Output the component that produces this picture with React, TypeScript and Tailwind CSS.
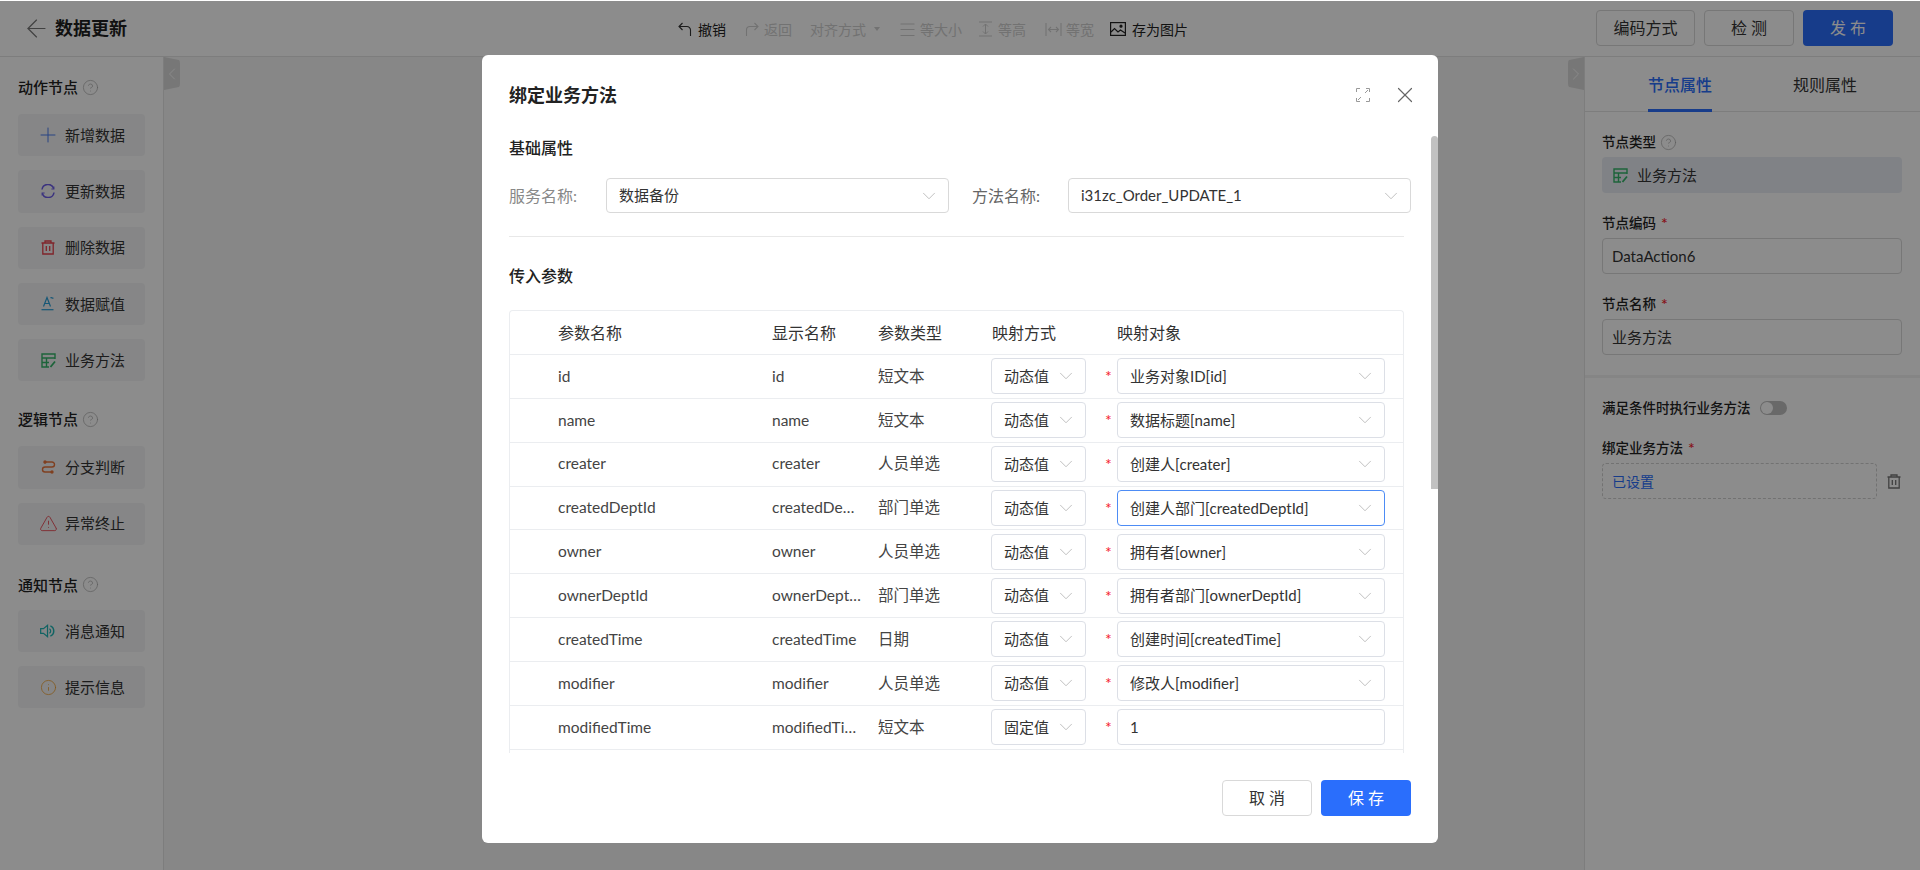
import { ArrowLeft, ChevronDown, ChevronLeft, ChevronRight, CircleHelp, Info, Plus, TriangleAlert, X } from "lucide-react";
import type { ReactNode } from "react";

const FONT = "font-['Lato','Noto_Sans_CJK_SC',sans-serif]";

function HelpIcon() {
  return <CircleHelp size={17} strokeWidth={1} className="text-[#aaa]" />;
}

function RefreshIcon() {
  return (
    <svg width="14" height="14" viewBox="0 0 14 14" fill="none" stroke="#6c5ce7" strokeWidth="1.5">
      <path d="M1 5.5A6 6 0 0 1 12.6 4.5" />
      <path d="M13 8.5A6 6 0 0 1 1.4 9.5" />
      <path d="M12.8 2.4v2.6h-2.4M1.2 11.6V9h2.4" strokeWidth="1.2" />
    </svg>
  );
}

function TrashIcon({ color }: { color: string }) {
  return (
    <svg width="14" height="15" viewBox="0 0 14 15" fill="none" stroke={color} strokeWidth="1.3">
      <path d="M0.5 3h13M4 3V1h6v2M1.8 3v11h10.4V3M5.3 6v5M8.7 6v5" />
    </svg>
  );
}

function AssignIcon() {
  return (
    <svg width="14" height="15" viewBox="0 0 14 15" fill="none" stroke="#2b9fd8" strokeWidth="1.2">
      <path d="M2.5 10.5L6 1.5l3.5 9M3.8 7.5h4.4" />
      <path d="M9.5 2c1-1 1.6 0.4 3 0" />
      <path d="M0.5 13.7h12" />
    </svg>
  );
}

function MethodIcon() {
  return (
    <svg width="15" height="15" viewBox="0 0 15 15" fill="none" stroke="#35b56a" strokeWidth="1.4">
      <path d="M14 6V1H1v13h7" />
      <path d="M1 5h13M5.5 5v9M1 9.5h7" />
      <path d="M9.5 14l4.5-5.5" strokeWidth="1.8" />
    </svg>
  );
}

function BranchIcon() {
  return (
    <svg width="15" height="14" viewBox="0 0 15 14" fill="none" stroke="#e8743b" strokeWidth="1.4">
      <path d="M3.5 2H11a2.5 2.5 0 0 1 0 5H4a2.5 2.5 0 0 0 0 5h7.5" />
      <circle cx="4" cy="2" r="1" fill="#e8743b" />
      <circle cx="11" cy="12" r="1" fill="#e8743b" />
    </svg>
  );
}

function SpeakerIcon() {
  return (
    <svg width="17" height="14" viewBox="0 0 17 14" fill="none" stroke="#1fb5b5" strokeWidth="1.3">
      <path d="M0.7 4.5h3L8 1v12L3.7 9.5h-3z" />
      <path d="M10 4.5a3 3 0 0 1 0 5" />
      <path d="M11 1.5a6 6 0 0 1 0 11" strokeWidth="1.6" />
    </svg>
  );
}

function SideItem({ icon, label }: { icon: ReactNode; label: string }) {
  return (
    <div className="flex h-[42.25px] w-[127px] items-center rounded-sm bg-[#f4f5f6] pl-[22px] text-[15px] text-[#333]">
      <span className="flex w-4 justify-center">{icon}</span>
      <span className="ml-[9px]">{label}</span>
    </div>
  );
}

function SideTitle({ label, className }: { label: string; className: string }) {
  return (
    <div className={`flex h-[22px] items-center gap-1 text-[15px] font-medium text-[#222] ${className}`}>
      {label}
      <HelpIcon />
    </div>
  );
}

function Sidebar() {
  return (
    <aside className="flex w-[164px] shrink-0 flex-col border-r border-[#e4e4e4] bg-white pl-[18px]">
      <SideTitle label="动作节点" className="mb-4 mt-[19px]" />
      <div className="flex flex-col gap-[14px]">
        <SideItem icon={<Plus size={24} strokeWidth={1} className="shrink-0 text-[#4a7cf0]" />} label="新增数据" />
        <SideItem icon={<RefreshIcon />} label="更新数据" />
        <SideItem icon={<TrashIcon color="#e8414d" />} label="删除数据" />
        <SideItem icon={<AssignIcon />} label="数据赋值" />
        <SideItem icon={<MethodIcon />} label="业务方法" />
      </div>
      <SideTitle label="逻辑节点" className="mb-4 mt-[27px]" />
      <div className="flex flex-col gap-[14px]">
        <SideItem icon={<BranchIcon />} label="分支判断" />
        <SideItem icon={<TriangleAlert size={19} strokeWidth={1.1} className="shrink-0 text-[#e8414d]" />} label="异常终止" />
      </div>
      <SideTitle label="通知节点" className="mb-[14px] mt-[29px]" />
      <div className="flex flex-col gap-[14px]">
        <SideItem icon={<SpeakerIcon />} label="消息通知" />
        <SideItem icon={<Info size={17} strokeWidth={1.1} className="shrink-0 text-[#f0a030]" />} label="提示信息" />
      </div>
    </aside>
  );
}

function ToolItem({ icon, label, off, gap, className }: { icon: ReactNode; label: string; off?: boolean; gap: string; className: string }) {
  return (
    <div className={`flex items-center text-[14px] ${gap} ${off ? "text-[#d0d0d0]" : "text-[#222]"} ${className}`}>
      {icon}
      <span>{label}</span>
    </div>
  );
}

function Toolbar() {
  return (
    <div className="absolute left-[678px] top-[19px] flex h-5 items-center">
      <ToolItem
        gap="gap-[6px]"
        className=""
        icon={
          <svg width="14" height="15" viewBox="0 0 14 15" fill="none" stroke="#333" strokeWidth="1.1">
            <path d="M4.5 1L1 4.5l3.5 3.5M1 4.5h8a3.5 3.5 0 0 1 3.5 3.5v6" />
          </svg>
        }
        label="撤销"
      />
      <ToolItem
        off
        gap="gap-[5px]"
        className="ml-[18px]"
        icon={
          <svg width="15" height="15" viewBox="0 0 15 15" fill="none" stroke="#d0d0d0" strokeWidth="1.1">
            <path d="M10.5 1L14 4.5 10.5 8M14 4.5H6A3.5 3.5 0 0 0 2.5 8v6" />
          </svg>
        }
        label="返回"
      />
      <div className="ml-[18px] flex items-center gap-[8px] text-[14px] text-[#d0d0d0]">
        对齐方式
        <span className="h-0 w-0 border-x-[3px] border-t-4 border-x-transparent border-t-[#d0d0d0]" />
      </div>
      <ToolItem
        off
        gap="gap-[5px]"
        className="ml-[20px]"
        icon={
          <svg width="15" height="15" viewBox="0 0 15 15" fill="none" stroke="#d0d0d0" strokeWidth="1">
            <path d="M0.5 2h14M0.5 7.5h14M0.5 13.5h14" />
          </svg>
        }
        label="等大小"
      />
      <ToolItem
        off
        gap="gap-[5px]"
        className="ml-[16px]"
        icon={
          <svg width="15" height="16" viewBox="0 0 15 16" fill="none" stroke="#d0d0d0" strokeWidth="1">
            <path d="M1 1h13M1 15h13M7.5 3v10M5 5.5L7.5 3 10 5.5M5 10.5L7.5 13l2.5-2.5" />
          </svg>
        }
        label="等高"
      />
      <ToolItem
        off
        gap="gap-[4px]"
        className="ml-[19px]"
        icon={
          <svg width="17" height="15" viewBox="0 0 17 15" fill="none" stroke="#d0d0d0" strokeWidth="1.1">
            <path d="M1 1v13M16 1v13M3.5 7.5h10M6 5L3.5 7.5 6 10M11 5l2.5 2.5L11 10" />
          </svg>
        }
        label="等宽"
      />
      <ToolItem
        gap="gap-[6px]"
        className="ml-[16px]"
        icon={
          <svg width="16" height="14" viewBox="0 0 16 14" fill="none" stroke="#222" strokeWidth="1.2">
            <rect x="0.6" y="0.6" width="14.8" height="12.8" />
            <path d="M1 10l3.5-3.5L8 10l2.5-2 4.5 3" />
            <circle cx="11" cy="4.2" r="1" fill="#222" />
          </svg>
        }
        label="存为图片"
      />
    </div>
  );
}

function FormInput({ label, value, required }: { label: string; value: string; required?: boolean }) {
  return (
    <div>
      <div className="flex h-[20px] items-center text-[13.5px] font-medium text-[#222]">
        {label}
        {required && <span className="ml-[5px] text-[16px] leading-none text-[#f5222d]">*</span>}
      </div>
      <div className="mt-[5px] flex h-9 w-[300px] items-center rounded-sm border border-[#d9d9d9] pl-[9px] text-[15px] text-[#333]">
        {value}
      </div>
    </div>
  );
}

function RightPanel() {
  return (
    <aside className="flex w-[336px] shrink-0 flex-col border-l border-[#e4e4e4] bg-white">
      <div className="flex h-[55px] justify-start border-b border-[#e4e4e4] pl-[63px] text-[16px] text-[#333]">
        <div className="flex h-[55px] w-[64px] items-center justify-center border-b-[3px] border-[#2a6efc] pt-[3px] font-medium text-[#2a6efc]">
          节点属性
        </div>
        <div className="ml-[81px] flex h-[55px] items-center pb-0">规则属性</div>
      </div>
      <div className="px-[17px] pt-[20px]">
        <div className="flex h-[20px] items-center gap-1 text-[13.5px] font-medium text-[#222]">
          节点类型
          <HelpIcon />
        </div>
        <div className="mt-[5px] flex h-9 w-[300px] items-center gap-[9px] rounded-sm bg-[#e9edf5] pl-[11px] text-[15px] text-[#333]">
          <MethodIcon />
          业务方法
        </div>
        <div className="mt-[20px]">
          <FormInput label="节点编码" value="DataAction6" required />
        </div>
        <div className="mt-[20px]">
          <FormInput label="节点名称" value="业务方法" required />
        </div>
      </div>
      <div className="mt-[20px] h-[3px] bg-[#f2f2f2]" />
      <div className="px-[17px]">
        <div className="mt-[20px] flex h-[20px] items-center text-[13.5px] font-medium text-[#222]">
          满足条件时执行业务方法
          <span className="ml-[9px] flex h-[14px] w-[27px] items-center rounded-full bg-[#bfbfbf] pl-px">
            <span className="h-3 w-3 rounded-full bg-white" />
          </span>
        </div>
        <div className="mt-[20px] flex h-[20px] items-center text-[13.5px] font-medium text-[#222]">
          绑定业务方法
          <span className="ml-[5px] text-[16px] leading-none text-[#f5222d]">*</span>
        </div>
        <div className="mt-[5px] flex items-center gap-[10px]">
          <div className="flex h-9 w-[275px] items-center rounded-sm border border-dashed border-[#d0d0d0] pl-[9px] text-[14px] text-[#2a6efc]">
            已设置
          </div>
          <TrashIcon color="#777" />
        </div>
      </div>
    </aside>
  );
}

function Select({ value, className }: { value: string; className: string }) {
  return (
    <div className={`flex shrink-0 items-center justify-between rounded border border-[#dcdfe6] text-[15px] text-[#333] ${className}`}>
      <span>{value}</span>
      <ChevronDown size={22} strokeWidth={0.8} className="shrink-0 text-[#aaa]" />
    </div>
  );
}

const rows = [
  ["id", "id", "短文本", "动态值", "业务对象ID[id]"],
  ["name", "name", "短文本", "动态值", "数据标题[name]"],
  ["creater", "creater", "人员单选", "动态值", "创建人[creater]"],
  ["createdDeptId", "createdDeptId", "部门单选", "动态值", "创建人部门[createdDeptId]"],
  ["owner", "owner", "人员单选", "动态值", "拥有者[owner]"],
  ["ownerDeptId", "ownerDeptId", "部门单选", "动态值", "拥有者部门[ownerDeptId]"],
  ["createdTime", "createdTime", "日期", "动态值", "创建时间[createdTime]"],
  ["modifier", "modifier", "人员单选", "动态值", "修改人[modifier]"],
  ["modifiedTime", "modifiedTime", "短文本", "固定值", "1"],
  ["modifiedBy", "modifiedBy", "短文本", "动态值", "修改人[modifiedBy]"],
];

function Row({ row, index }: { row: string[]; index: number }) {
  const isInput = row[4] === "1";
  return (
    <div className="flex h-[43.85px] shrink-0 items-center border-b border-[#ebedf0] pl-[48px] text-[15.5px] text-[#444]">
      <div className="w-[214px]">{row[0]}</div>
      <div className="w-[106px]">
        <div className="w-[89px] truncate">{row[1]}</div>
      </div>
      <div className="w-[113px]">{row[2]}</div>
      <Select value={row[3]} className="h-[36px] w-[95px] pl-[12px] pr-[8px]" />
      <span className="w-[31px] pl-[19px] text-[16px] leading-none text-[#f5222d]">*</span>
      {isInput ? (
        <div className="flex h-[36px] w-[268px] items-center rounded-sm border border-[#dcdfe6] pl-[12px] text-[15px] text-[#333]">1</div>
      ) : (
        <Select
          value={row[4]}
          className={`h-[36px] w-[268px] pl-[12px] pr-[8px] ${index === 3 ? "!border-[#4d8cf5]" : ""}`}
        />
      )}
    </div>
  );
}

function Modal() {
  const headers = ["参数名称", "显示名称", "参数类型", "映射方式", "映射对象"];
  return (
    <div className="flex h-[788px] w-[956px] flex-col rounded-md bg-white">
      <div className="flex h-[68px] shrink-0 items-center justify-between pl-[27px] pr-[20px] pt-[12px]">
        <h2 className="text-[18px] font-bold text-[#222]">绑定业务方法</h2>
        <div className="flex items-center gap-[22px]">
          <svg width="14" height="14" viewBox="0 0 14 14" fill="none" stroke="#999" strokeWidth="1">
            <path d="M0.5 4V0.5H4M10 0.5h3.5V4M0.5 10v3.5H4M10 13.5h3.5V10M9 5l3-3M2 12l3-3" />
          </svg>
          <X size={26} strokeWidth={1.1} className="text-[#666]" />
        </div>
      </div>
      <div className="relative min-h-0 flex-1 overflow-hidden pl-[27px] pr-[27px]">
        <div className="absolute right-0 top-[13px] h-[353px] w-[7px] rounded-t bg-[#c1c1c1]" />
        <h3 className="mt-[14px] h-[22px] text-[16px] font-medium leading-[22px] text-[#222]">基础属性</h3>
        <div className="mt-[19px] flex items-center">
          <span className="w-[97px] text-[16px] text-[#888]">服务名称:</span>
          <Select value="数据备份" className="h-[35px] w-[343px] pl-[12px] pr-[8px] !border-[#d9d9d9]" />
          <span className="ml-[23px] w-[96px] text-[16px] text-[#666]">方法名称:</span>
          <Select value="i31zc_Order_UPDATE_1" className="h-[35px] w-[343px] pl-[12px] pr-[8px] !border-[#d9d9d9]" />
        </div>
        <div className="mt-[23px] h-px w-[895px] bg-[#e8e8e8]" />
        <h3 className="mt-[28px] h-[22px] text-[16px] font-medium leading-[22px] text-[#222]">传入参数</h3>
        <div className="mt-[23px] flex w-[895px] flex-col rounded-t border-x border-t border-[#ebedf0]">
          <div className="flex h-[44px] shrink-0 items-center border-b border-[#ebedf0] pl-[48px] text-[16px] text-[#333]">
            <div className="w-[214px]">{headers[0]}</div>
            <div className="w-[106px]">{headers[1]}</div>
            <div className="w-[114px]">{headers[2]}</div>
            <div className="w-[125px]">{headers[3]}</div>
            <div>{headers[4]}</div>
          </div>
          {rows.map((row, i) => (
            <Row key={row[0]} row={row} index={i} />
          ))}
        </div>
      </div>
      <div className="flex h-[90px] shrink-0 justify-end gap-[9px] pr-[27px] pt-[27px]">
        <button className="h-9 w-[90px] rounded-sm border border-[#d9d9d9] pl-1 text-[16px] tracking-[4px] text-[#333]">取消</button>
        <button className="h-9 w-[90px] rounded-sm bg-[#2a6efc] pl-1 text-[16px] tracking-[4px] text-white">保存</button>
      </div>
    </div>
  );
}

export default function App() {
  return (
    <div className={`relative flex h-[870px] w-[1920px] flex-col overflow-hidden bg-white ${FONT}`}>
      <header className="relative flex h-[57px] shrink-0 items-center justify-between border-b border-[#e4e4e4] pl-[22px] pr-[27px]">
        <div className="flex items-center gap-1">
          <ArrowLeft size={29} strokeWidth={1} className="text-[#777]" />
          <span className="text-[18px] font-bold text-[#1f1f1f]">数据更新</span>
        </div>
        <Toolbar />
        <div className="flex items-center gap-[9px] text-[16px]">
          <button className="h-9 w-[99px] rounded-sm border border-[#d9d9d9] text-[#333]">编码方式</button>
          <button className="h-9 w-[90px] rounded-sm border border-[#d9d9d9] pl-1 tracking-[4px] text-[#333]">检测</button>
          <button className="h-9 w-[90px] rounded-sm bg-[#2a6efc] pl-1 tracking-[4px] text-white">发布</button>
        </div>
      </header>
      <div className="relative flex min-h-0 flex-1">
        <Sidebar />
        <main className="relative flex-1 bg-[#f6f6f6]">
          <div className="absolute left-0 top-0 flex h-[33px] w-4 items-center justify-center rounded-r-md bg-[#d9d9d9] [clip-path:polygon(0_0,100%_10%,100%_90%,0_100%)]">
            <ChevronLeft size={20} strokeWidth={1} className="shrink-0 text-white" />
          </div>
          <div className="absolute right-0 top-0 flex h-[33px] w-4 items-center justify-center rounded-l-md bg-[#d9d9d9] [clip-path:polygon(0_10%,100%_0,100%_100%,0_90%)]">
            <ChevronRight size={20} strokeWidth={1} className="shrink-0 text-white" />
          </div>
        </main>
        <RightPanel />
      </div>
      <div className="absolute inset-x-0 bottom-0 top-px flex justify-center bg-black/45 pt-[54px]">
        <Modal />
      </div>
    </div>
  );
}
